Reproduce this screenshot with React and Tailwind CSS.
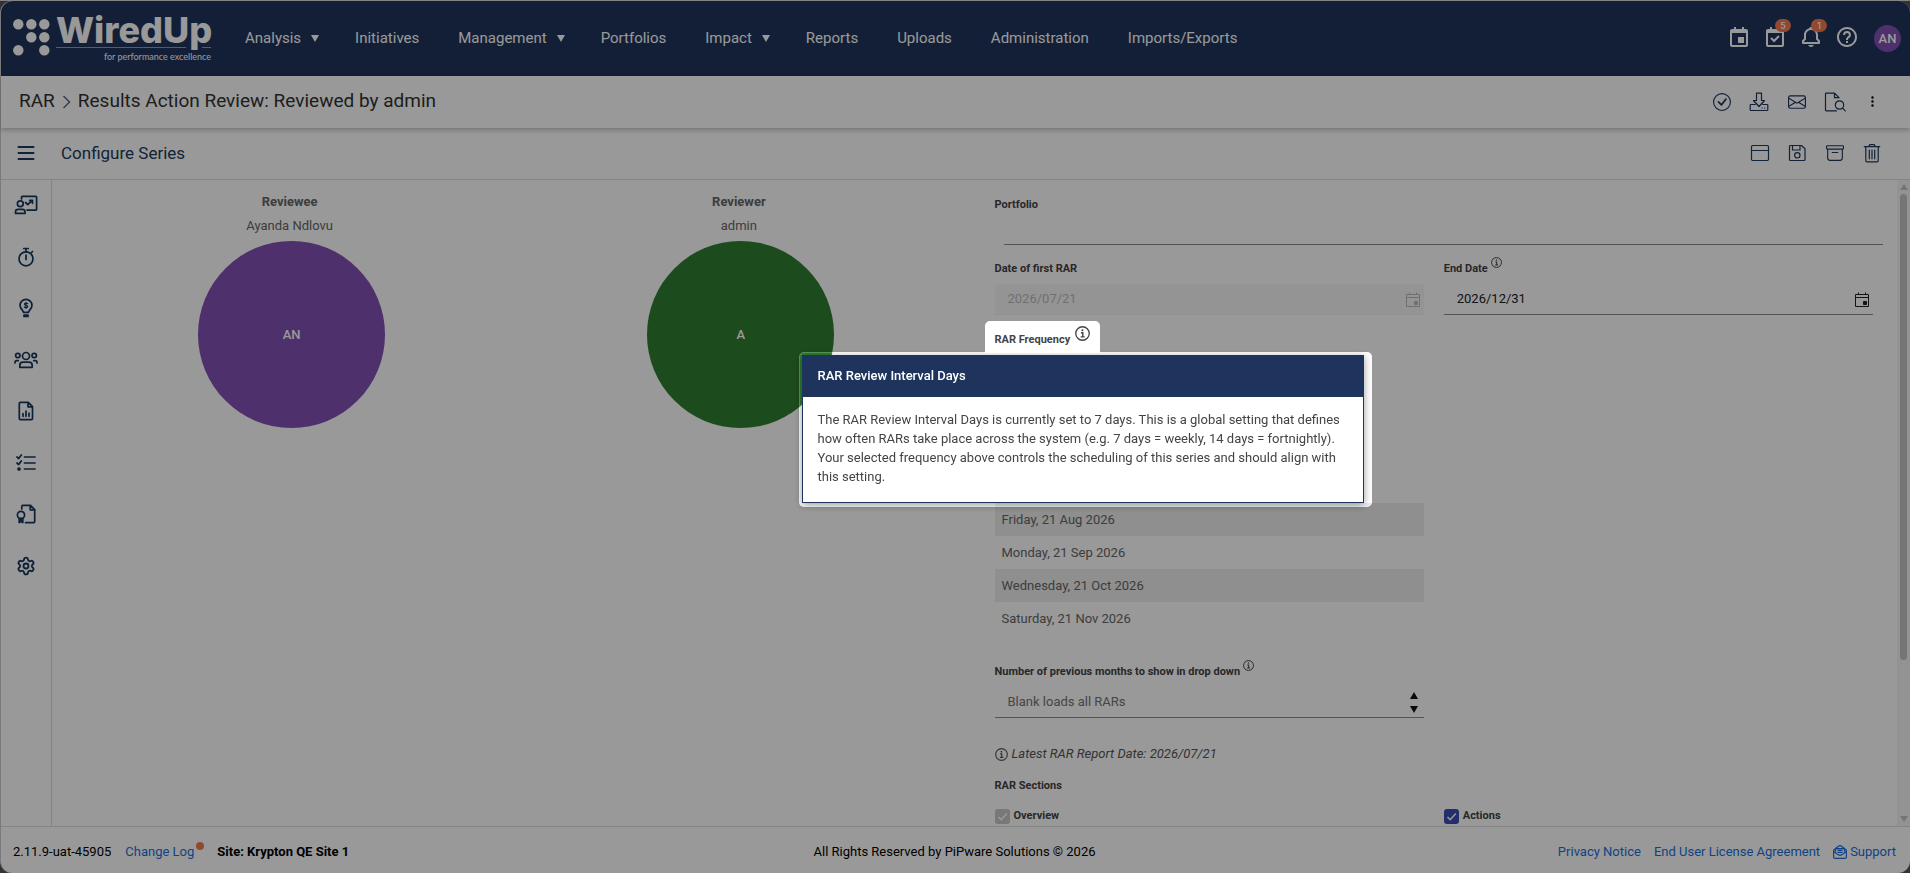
import React from "react";
import { BiCalendarEvent, BiCalendarCheck, BiBell, BiHelpCircle } from "react-icons/bi";
import { BsCheckCircle, BsEnvelope, BsThreeDotsVertical, BsArchive } from "react-icons/bs";
import { Settings } from "lucide-react";

const NAV = [
  ["Analysis", true],
  ["Initiatives", false],
  ["Management", true],
  ["Portfolios", false],
  ["Impact", true],
  ["Reports", false],
  ["Uploads", false],
  ["Administration", false],
  ["Imports/Exports", false],
];

const DATES = ["Friday, 21 Aug 2026", "Monday, 21 Sep 2026", "Wednesday, 21 Oct 2026", "Saturday, 21 Nov 2026"];

function Line({ children, className = "size-5", width = 1.2, box = "0 0 20 20" }) {
  return (
    <svg viewBox={box} className={className} fill="none" stroke="currentColor" strokeWidth={width} strokeLinejoin="round" strokeLinecap="round" aria-hidden="true">
      {children}
    </svg>
  );
}

const SaveToDisk = () => (
  <Line>
    <path d="M7.500 1.200h5v7.300h3L10 14.500 4.500 8.500h3z" />
    <path d="M6.300 12.500H2a.8.8 0 0 0-.8.8v4.400c0 .5.300.8.8.8h16c.5 0 .8-.3.8-.8v-4.400a.8.8 0 0 0-.8-.8h-4.300M13 16h.2M15.500 16h.2" />
  </Line>
);
const FileSearch = () => (
  <Line className="h-5 w-[22px]" box="0 0 22 20">
    <path d="M12.500 18.800H2.300a.8.8 0 0 1-.8-.8V2c0-.5.300-.8.8-.8h8.200l4.500 4.500M10.500 1.200v4.500H15" />
    <circle cx="15.500" cy="13" r="4.200" />
    <path d="m18.600 16.200 2.700 2.700" />
  </Line>
);
const WindowIcon = () => (
  <Line>
    <rect x="1.500" y="2.500" width="17" height="15" rx="1.200" />
    <path d="M1.500 7.500h17" />
  </Line>
);
const Floppy = () => (
  <Line>
    <path d="M3.500 2.500h11l3.500 3.300v10.700a1 1 0 0 1-1 1H3.500a1 1 0 0 1-1-1v-13a1 1 0 0 1 1-1z" />
    <path d="M5.500 2.500V7h7.500V2.500" />
    <circle cx="10.300" cy="12.300" r="2.700" />
  </Line>
);
const Trash = () => (
  <Line>
    <path d="M3.800 4.200V17.500c0 .8.500 1.300 1.300 1.300h9.800c.8 0 1.300-.5 1.300-1.300V4.200M2.300 3.700h15.400M6.800 3.500l1-1.900h4.400l1 1.900M7.300 7v8.800M10 7v8.800M12.700 7v8.800" />
  </Line>
);
const Menu = () => (
  <Line width={2}>
    <path d="M2.500 4h15M2.500 10h15M2.500 16h15" />
  </Line>
);

const PresentationUser = () => (
  <Line className="h-5 w-6" width={1.700} box="0 0 24 20">
    <path d="M7.500 4V2.200c0-.5.300-.8.8-.8h13.500c.5 0 .8.300.8.8v12.100c0 .5-.3.8-.8.8H13" />
    <circle cx="6.300" cy="8.800" r="2.900" />
    <path d="M1.500 18.400v-1.600c0-1.500 1-2.500 2.500-2.500h4.500c1.500 0 2.500 1 2.500 2.500v1.600zM11.500 7.500l2.300 2 4.200-3.800M15.600 5.300h2.900v3" />
  </Line>
);
const Stopwatch = () => (
  <Line width={1.700}>
    <circle cx="10" cy="11.800" r="7" />
    <path d="M10 8v4.500M7.800 1.500h4.400M10 1.700v3M15.500 5.500l1-1" />
  </Line>
);
const BulbDollar = () => (
  <Line width={1.700}>
    <path d="M7.500 14.300C7 11.800 4 10.800 4 7.300a6 6 0 0 1 12 0c0 3.500-3 4.500-3.500 7z" />
    <path d="M8 17h4v1.500H8z" fill="currentColor" />
    <path d="M11.700 5.700c-.5-.8-3.300-.9-3.300.5 0 1.500 3.400.8 3.400 2.300 0 1.400-2.900 1.400-3.500.4M10 4.300v6.200" strokeWidth="1.100" />
  </Line>
);
const Team = () => (
  <Line className="h-5 w-6" width={1.700} box="0 0 24 20">
    <circle cx="12" cy="6" r="3.500" />
    <circle cx="3.800" cy="5.500" r="2.200" />
    <circle cx="20.200" cy="5.500" r="2.200" />
    <path d="M5.800 17.300v-1.800c0-2 1.300-3.300 3.300-3.300h5.800c2 0 3.300 1.300 3.300 3.300v1.800zM1 13v-.5c0-1 .8-1.800 1.800-1.800h1.500M23 13v-.5c0-1-.8-1.800-1.800-1.800h-1.500" />
  </Line>
);
const FileChart = () => (
  <Line width={1.700}>
    <path d="M4.300 1.400h8l4.200 4.200v12c0 .6-.4 1-1 1H4.300c-.6 0-1-.4-1-1V2.400c0-.6.400-1 1-1zM12 1.600v4.200h4.200M7 12.500v2.800M10 10v5.300M13 12.200v3.100" />
  </Line>
);
const Checklist = () => (
  <Line width={1.700}>
    <path d="M8.500 4h10.500M8.500 10h10.500M8.500 16h10.500M1 4l1.700 1.500L5.300 2M1 10l1.700 1.500L5.300 8" />
    <circle cx="3" cy="16" r="1" fill="currentColor" />
  </Line>
);
const FileAward = () => (
  <Line width={1.700}>
    <path d="M5.800 5V2.400c0-.6.400-1 1-1h7.700l4.200 4.200v12c0 .6-.4 1-1 1H9.500M14.200 1.600v4.200h4.200" />
    <circle cx="5" cy="11" r="3.600" />
    <path d="M3.200 14.600v4l1.800-1 1.800 1v-4z" fill="currentColor" />
  </Line>
);

const SIDE = [
  ["Presentation", PresentationUser],
  ["Timer", Stopwatch],
  ["Ideas", BulbDollar],
  ["Team", Team],
  ["Report", FileChart],
  ["Checklist", Checklist],
  ["Awards", FileAward],
  ["Settings", () => <Settings className="size-5" strokeWidth={2.2} />],
];

function IconButton({ label, children }) {
  return (
    <button type="button" aria-label={label} className="flex h-8 items-center justify-center">
      {children}
    </button>
  );
}

function Logo() {
  return (
    <a href="#home" aria-label="WiredUp for performance excellence" className="flex w-[200px] shrink-0 items-start gap-[6px] pt-[13px] text-white">
      <svg viewBox="0 0 37 38" className="mt-[5px] h-[38px] w-[37px] shrink-0" fill="currentColor" aria-hidden="true">
        <circle cx="5.300" cy="5.300" r="5.200" />
        <circle cx="18.300" cy="5.300" r="5.200" />
        <circle cx="31.300" cy="5.300" r="5.200" />
        <circle cx="18.300" cy="18.300" r="5.200" />
        <circle cx="31.300" cy="18.300" r="5.200" />
        <circle cx="5.300" cy="31.300" r="5.200" />
        <circle cx="31.300" cy="31.300" r="5.200" />
      </svg>
      <span className="flex w-[155px] flex-col">
        <span className="font-['Inter'] text-[36px] leading-[33px] font-extrabold">WiredUp</span>
        <span className="flex justify-between">
          <span className="h-px w-[130px] bg-white/50" />
          <span className="h-px w-[9px] bg-white/50" />
        </span>
        <span className="pt-[3px] text-right font-['Lato'] text-[9px] leading-[12px]">for performance excellence</span>
      </span>
    </a>
  );
}

function Badge({ children }) {
  return (
    <span className="absolute -top-[6px] left-[12px] flex h-[13px] w-4 items-center justify-center rounded-full bg-[#f47b50] font-['Inter'] text-[9px] leading-none font-medium text-white">
      {children}
    </span>
  );
}

function Header() {
  return (
    <header className="flex h-[75px] shrink-0 items-stretch rounded-t-xl bg-[#1e355d] pr-[9px] pl-3 text-white">
      <Logo />
      <nav className="ml-8 flex flex-1 items-center gap-[39px] text-[15px]">
        {NAV.map(([name, menu]) => (
          <a key={name} href={"#" + name} className="flex items-center gap-[10px]">
            {name}
            {menu && (
              <svg viewBox="0 0 8 7" className="-mr-[3px] h-[7px] w-2" fill="currentColor" aria-hidden="true">
                <path d="M0 0h8L4 7z" />
              </svg>
            )}
          </a>
        ))}
      </nav>
      <div className="flex items-center gap-[15px]">
        <div className="flex items-center gap-3 pb-[3px] text-[24px]">
          <button type="button" aria-label="Calendar"><BiCalendarEvent /></button>
          <button type="button" aria-label="Tasks" className="relative"><BiCalendarCheck /><Badge>5</Badge></button>
          <button type="button" aria-label="Notifications" className="relative"><BiBell /><Badge>1</Badge></button>
          <button type="button" aria-label="Help"><BiHelpCircle /></button>
        </div>
        <button type="button" className="flex size-[27px] items-center justify-center rounded-full bg-[#8150b4] text-[13px] font-medium">AN</button>
      </div>
    </header>
  );
}

function Person({ role, name, initials, color }) {
  return (
    <div className="flex flex-col items-center text-[13px] leading-4 text-[#666]">
      <div className="font-bold">{role}</div>
      <div className="mt-2">{name}</div>
      <div className={"mt-[7px] ml-1 flex size-[187px] items-center justify-center rounded-full font-medium text-white " + color}>{initials}</div>
    </div>
  );
}

const Info = ({ className = "size-[11px]" }) => (
  <svg viewBox="0 0 16 16" className={className + " shrink-0"} fill="none" stroke="currentColor" aria-hidden="true">
    <circle cx="8" cy="8" r="7.200" strokeWidth="1.400" />
    <path d="M6.300 7.200h2v4.300M6 11.600h4.300" strokeWidth="1.500" />
    <circle cx="7.900" cy="4.500" r="1.100" fill="currentColor" stroke="none" />
  </svg>
);

const CalendarIcon = () => (
  <svg viewBox="0 0 14 15" className="h-[15px] w-[14px]" fill="none" stroke="currentColor" aria-hidden="true">
    <path d="M.5 2.500h13v12H.5zM.5 5.500h13M3.500.5v2M10.500.5v2" />
    <path d="M8.500 9.500h3v3h-3z" fill="currentColor" />
  </svg>
);

function DateField({ id, label, value, disabled, info }) {
  return (
    <div className="flex flex-col">
      <div className="flex h-4 items-center gap-[3px]">
        <label htmlFor={id}>{label}</label>
        {info && <Info className="mb-[14px] size-[11px]" />}
      </div>
      <div className={"mt-[7px] flex h-[31px] items-center border-b pr-1 pl-[13px] text-[13px] font-normal " + (disabled ? "rounded-t border-[#f0f0f0] bg-[#f7f7f7] text-[#bbb]" : "border-[#8c8c8c] text-[#222]")}>
        <input id={id} type="text" defaultValue={value} disabled={disabled} className="min-w-0 flex-1 bg-transparent outline-none" />
        <button type="button" aria-label={"Pick " + label} disabled={disabled}><CalendarIcon /></button>
      </div>
    </div>
  );
}

function Check({ label, disabled }) {
  return (
    <label className="flex items-start gap-1">
      <span className="relative flex size-[15px]">
        <input type="checkbox" defaultChecked disabled={disabled} className="size-[15px] appearance-none rounded-[3px] bg-[#3f4db5] disabled:bg-[#c8c8c8]" />
        <svg viewBox="0 0 15 15" className="pointer-events-none absolute inset-0 size-[15px]" fill="none" stroke="white" strokeWidth="1.600" aria-hidden="true">
          <path d="m3.500 8 2.700 2.700L11.800 4.500" />
        </svg>
      </span>
      <span className="leading-[13px]">{label}</span>
    </label>
  );
}

function FrequencyHelp() {
  return (
    <div role="tooltip" className="fixed z-20 mt-[4px] -ml-[196px] w-[573px] rounded-[5px] border border-white/20 pt-[2px] pr-[7px] pb-[3px] pl-[2px] shadow-[0_0_0_9999px_rgba(0,0,0,0.4)]">
      <div className="border border-[#1e345c] bg-white text-[13px] shadow-[0_2px_8px_rgba(0,0,0,0.4)]">
        <h2 className="flex h-[41px] items-center bg-[#1e345c] px-[15px] pb-[2px] font-medium text-white">RAR Review Interval Days</h2>
        <p className="px-[15px] pt-[13px] pb-4 leading-[19px] font-normal text-[#444]">
          The RAR Review Interval Days is currently set to 7 days. This is a global setting that defines how often RARs take place across the system (e.g. 7 days = weekly, 14 days = fortnightly). Your selected frequency above controls the scheduling of this series and should align with this setting.
        </p>
      </div>
    </div>
  );
}

function Form() {
  return (
    <form className="pt-[3px] pl-[10px] text-[11px] leading-4 font-bold text-[#444]">
      <label htmlFor="portfolio" className="block">Portfolio</label>
      <div className="ml-[9px]">
        <input id="portfolio" type="text" className="block h-8 w-full border-b border-[#8c8c8c] bg-transparent outline-none" />
      </div>
      <div className="mt-4 mr-[10px] grid grid-cols-2 gap-x-5">
        <DateField id="first" label="Date of first RAR" value="2026/07/21" disabled />
        <DateField id="end" label="End Date" value="2026/12/31" info />
        <div className="mt-[6px]">
          <div className="relative z-30 -ml-[10px] flex h-8 w-[115px] items-center gap-[5px] rounded-t-[5px] bg-white pt-[6px] pl-[10px]">
            <span>RAR Frequency</span>
            <Info className="mb-[14px] size-[15px]" />
          </div>
          <div className="-mt-[5px]"><FrequencyHelp /></div>
          <table className="mt-[155px] w-full text-[13px] font-normal text-[#666]">
            <tbody>
              {DATES.map((d) => (
                <tr key={d} className="h-[33px] odd:bg-[#eee]">
                  <td className="px-[7px]">{d}</td>
                </tr>
              ))}
            </tbody>
          </table>
          <div className="mt-[29px] flex h-4 items-center gap-[3px]">
            <label htmlFor="months">Number of previous months to show in drop down</label>
            <Info className="mb-[14px] size-[11px]" />
          </div>
          <div className="mt-[7px] flex h-[31px] items-center border-b border-[#8c8c8c] pr-[6px] pl-[13px] text-[13px] font-normal">
            <input id="months" type="text" placeholder="Blank loads all RARs" className="min-w-0 flex-1 bg-transparent outline-none placeholder:text-[#757575]" />
            <span className="flex flex-col gap-[7px] text-[#111]">
              <button type="button" aria-label="Increase">
                <svg viewBox="0 0 8 7" className="block h-[7px] w-2" fill="currentColor" aria-hidden="true"><path d="M4 0l4 7H0z" /></svg>
              </button>
              <button type="button" aria-label="Decrease">
                <svg viewBox="0 0 8 7" className="block h-[7px] w-2" fill="currentColor" aria-hidden="true"><path d="M4 7L0 0h8z" /></svg>
              </button>
            </span>
          </div>
        </div>
      </div>
      <p className="mt-7 flex items-center gap-1 text-[13px] font-normal text-[#555] italic">
        <Info className="size-[13px]" />
        Latest RAR Report Date: 2026/07/21
      </p>
      <div className="mt-4">RAR Sections</div>
      <div className="mt-[15px] mr-[10px] grid grid-cols-2 gap-x-5">
        <Check label="Overview" disabled />
        <Check label="Actions" />
      </div>
    </form>
  );
}

function Scrollbar() {
  return (
    <div className="flex w-[13px] shrink-0 flex-col items-center bg-[#f5f5f5] py-1 text-[#c4c4c4]" aria-hidden="true">
      <svg viewBox="0 0 8 6" className="h-[6px] w-2 shrink-0" fill="currentColor"><path d="M4 0l4 6H0z" /></svg>
      <div className="mt-1 h-[73%] w-[7px] rounded-full bg-[#c4c4c4]" />
      <svg viewBox="0 0 8 6" className="mt-auto h-[6px] w-2 shrink-0" fill="currentColor"><path d="M4 6L0 0h8z" /></svg>
    </div>
  );
}

const SupportIcon = () => (
  <svg viewBox="0 0 14 14" className="size-[14px]" fill="none" stroke="currentColor" strokeWidth="1.200" strokeLinejoin="round" aria-hidden="true">
    <path d="M2.500 3.600 5.500 1.300c.9-.7 2.100-.7 3 0l3 2.300 1.900 1.700v6.800c0 .7-.5 1.200-1.200 1.200H1.800c-.7 0-1.200-.5-1.200-1.200V5.300z" />
    <path d="M2.500 6.800V3.600h9v3.200M.6 6.500l4.700 3.200c1 .7 2.400.7 3.400 0l4.700-3.200M4.500 5.300h5M4.500 7.300h5" />
  </svg>
);

export default function App() {
  return (
    <div className="flex h-screen flex-col overflow-hidden border-t border-[#ddd] bg-[#555] font-['Roboto',sans-serif]">
      <div className="flex min-h-0 flex-1 flex-col rounded-xl border-l border-[#ccc] bg-white">
        <Header />
        <div className="relative flex h-[52px] shrink-0 items-center justify-between pr-[19px] pb-px pl-[18px] shadow-[0_2px_5px_rgba(0,0,0,0.25)]">
          <h1 className="flex items-center gap-[7px] text-[19px] text-[#333]">
            RAR
            <svg viewBox="0 0 9 14" className="h-[14px] w-[9px]" fill="none" stroke="#5d6b80" strokeWidth="1.500" aria-hidden="true"><path d="m1.500 1 6 6-6 6" /></svg>
            <span>Results Action Review: Reviewed by admin</span>
          </h1>
          <div className="grid w-[188px] grid-cols-5 text-[18px] text-[#1e345c]">
            <IconButton label="Approve"><BsCheckCircle /></IconButton>
            <IconButton label="Download"><SaveToDisk /></IconButton>
            <IconButton label="Email"><BsEnvelope /></IconButton>
            <IconButton label="Preview"><FileSearch /></IconButton>
            <IconButton label="More"><BsThreeDotsVertical className="size-[13px] text-black" /></IconButton>
          </div>
        </div>
        <div className="flex h-[52px] shrink-0 items-center border-b border-[#ddd] pr-[19px] pb-px pl-[15px] text-[#1e3a5c]">
          <button type="button" aria-label="Toggle menu"><Menu /></button>
          <h2 className="ml-[25px] flex-1 pt-[2px] text-[17px]">Configure Series</h2>
          <div className="grid w-[150px] grid-cols-4 text-[18px]">
            <IconButton label="Window"><WindowIcon /></IconButton>
            <IconButton label="Save"><Floppy /></IconButton>
            <IconButton label="Archive"><BsArchive /></IconButton>
            <IconButton label="Delete"><Trash /></IconButton>
          </div>
        </div>
        <div className="flex min-h-0 flex-1">
          <aside className="w-[51px] shrink-0 border-r border-[#ddd] pt-[13px] text-[#17375e]">
            <nav className="flex h-[385px] flex-col items-center justify-between">
              {SIDE.map(([label, Icon]) => (
                <a key={label} href={"#" + label} aria-label={label} className="flex size-6 items-center justify-center"><Icon /></a>
              ))}
            </nav>
          </aside>
          <main className="grid min-w-0 flex-1 grid-cols-2 items-start gap-x-[21px] overflow-hidden pt-[14px] pr-[14px] pl-[13px]">
            <div className="grid grid-cols-2">
              <Person role="Reviewee" name="Ayanda Ndlovu" initials="AN" color="bg-[#8150b4]" />
              <Person role="Reviewer" name="admin" initials="A" color="bg-[#2f7d32]" />
            </div>
            <Form />
          </main>
          <Scrollbar />
        </div>
        <footer className="grid h-[47px] shrink-0 grid-cols-3 items-center border-t border-[#ddd] pt-[3px] pr-[14px] pl-3 text-[13px] text-black">
          <div className="flex items-center gap-[14px]">
            <span>2.11.9-uat-45905</span>
            <a href="#changelog" className="relative mr-[9px] text-[#1a6fe0]">
              Change Log
              <span className="absolute top-0 -right-[10px] size-2 rounded-full bg-[#f47b50]" />
            </a>
            <span className="font-bold">Site: Krypton QE Site 1</span>
          </div>
          <div className="text-center">All Rights Reserved by PiPware Solutions © 2026</div>
          <div className="flex items-center justify-end gap-[13px] text-[#1a6fe0]">
            <a href="#privacy">Privacy Notice</a>
            <a href="#eula">End User License Agreement</a>
            <a href="#support" className="flex items-center gap-[3px]"><SupportIcon />Support</a>
          </div>
        </footer>
      </div>
    </div>
  );
}
